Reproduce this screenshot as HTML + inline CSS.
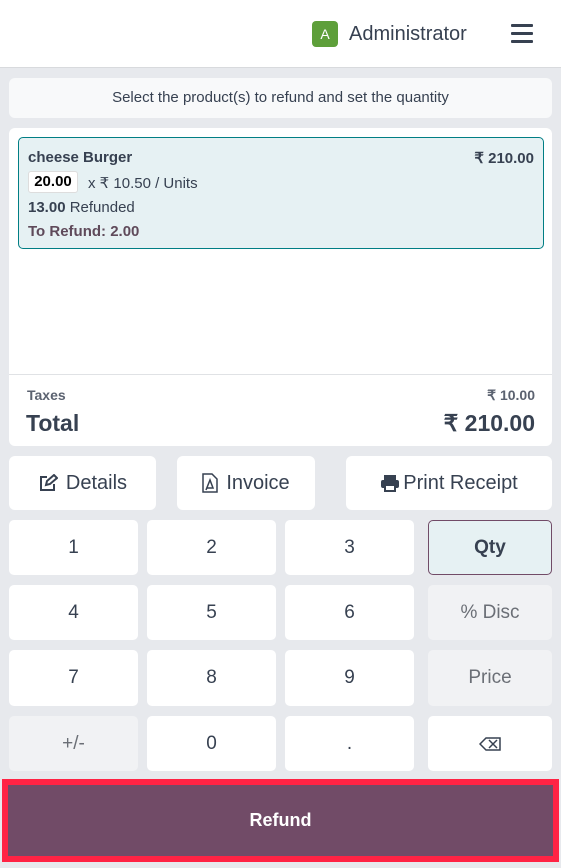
<!DOCTYPE html>
<html><head><style>
*{box-sizing:border-box;margin:0;padding:0}
body{width:561px;height:868px;background:#e7e9ed;font-family:"Liberation Sans",sans-serif;color:#374151;position:relative;overflow:hidden}
.abs{position:absolute}
.hdr{left:0;top:0;width:561px;height:68px;background:#fff;border-bottom:1px solid #d8dadd}
.av{left:312px;top:21px;width:26px;height:26px;background:#5e9f3a;border-radius:4px;color:#fff;font-size:14px;text-align:center;line-height:26px}
.nm{left:349px;top:23px;font-size:20px;color:#374151}
.burger{left:511px;top:24px;width:22px}
.burger div{height:3px;background:#374151;margin-bottom:5px;border-radius:1px}
.notice{left:9px;top:78px;width:543px;height:40px;background:#f8f9fa;border-radius:6px;text-align:center;font-size:15px;line-height:40px;color:#374151}
.panel{left:9px;top:128px;width:543px;height:318px;background:#fff;border-radius:6px}
.line{left:18px;top:137px;width:526px;height:112px;background:#e6f1f3;border:1px solid #017e84;border-radius:5px;font-size:15px}
.btn{background:#fff;border-radius:6px;text-align:center;font-size:20px;color:#374151;display:flex;align-items:center;justify-content:center;gap:8px}
.k{background:#fff;border-radius:5px;text-align:center;font-size:19px;color:#374151;display:flex;align-items:center;justify-content:center}
.g{background:#f1f2f4;color:#6b6f76}
</style></head><body>
<div class="abs hdr"></div>
<div class="abs av">A</div>
<div class="abs nm">Administrator</div>
<div class="abs burger"><div></div><div></div><div></div></div>
<div class="abs notice">Select the product(s) to refund and set the quantity</div>
<div class="abs panel"></div>
<div class="abs line">
 <div class="abs" style="left:9px;top:11px;font-weight:bold">cheese Burger</div>
 <div class="abs" style="right:9px;top:11px;font-weight:bold">₹ 210.00</div>
 <div class="abs" style="left:9px;top:33px;width:50px;height:22px;background:#fff;border:1px solid #ddd;border-radius:3px;font-weight:bold;color:#000;text-align:center;line-height:20px;font-size:15px">20.00</div>
 <div class="abs" style="left:69px;top:36px">x ₹ 10.50 / Units</div>
 <div class="abs" style="left:9px;top:61px"><b>13.00</b> Refunded</div>
 <div class="abs" style="left:9px;top:85px;color:#5f4a5a;font-weight:600">To Refund: 2.00</div>
</div>
<div class="abs" style="left:9px;top:374px;width:543px;height:1px;background:#e0e2e5"></div>
<div class="abs" style="left:27px;top:387px;font-size:14px;font-weight:bold;color:#5b6270">Taxes</div>
<div class="abs" style="right:26px;top:387px;font-size:14px;font-weight:bold;color:#5b6270">₹ 10.00</div>
<div class="abs" style="left:26px;top:410px;font-size:23px;font-weight:bold">Total</div>
<div class="abs" style="right:26px;top:410px;font-size:23px;font-weight:bold">₹ 210.00</div>

<div class="abs btn" style="left:9px;top:456px;width:147px;height:54px"><svg width="20" height="18" viewBox="0 0 20 18" fill="none" stroke="#374151" stroke-width="2"><path d="M9 3H3v13h13v-6"/><path d="M8 11l1-4 7-6 3 3-7 6z"/></svg>Details</div>
<div class="abs btn" style="left:177px;top:456px;width:138px;height:54px"><svg width="16" height="20" viewBox="0 0 16 20" fill="none" stroke="#374151" stroke-width="1.5"><path d="M1 1h9l5 5v13H1z"/><path d="M4 17l4-10 3 8H5"/></svg>Invoice</div>
<div class="abs btn" style="left:346px;top:456px;width:206px;height:54px;gap:3px"><svg width="20" height="18" viewBox="0 0 20 18" fill="#374151"><rect x="4" y="1" width="12" height="5"/><rect x="1" y="6" width="18" height="8" rx="2"/><rect x="5" y="11" width="10" height="6" fill="#fff" stroke="#374151" stroke-width="2"/></svg>Print Receipt</div>

<div class="abs k" style="left:9px;top:520px;width:129px;height:55px">1</div>
<div class="abs k" style="left:147px;top:520px;width:129px;height:55px">2</div>
<div class="abs k" style="left:285px;top:520px;width:129px;height:55px">3</div>
<div class="abs k" style="left:428px;top:520px;width:124px;height:55px;background:#e6f1f3;border:1px solid #714b67;font-weight:bold">Qty</div>
<div class="abs k" style="left:9px;top:585px;width:129px;height:55px">4</div>
<div class="abs k" style="left:147px;top:585px;width:129px;height:55px">5</div>
<div class="abs k" style="left:285px;top:585px;width:129px;height:55px">6</div>
<div class="abs k g" style="left:428px;top:585px;width:124px;height:55px">% Disc</div>
<div class="abs k" style="left:9px;top:650px;width:129px;height:56px">7</div>
<div class="abs k" style="left:147px;top:650px;width:129px;height:56px">8</div>
<div class="abs k" style="left:285px;top:650px;width:129px;height:56px">9</div>
<div class="abs k g" style="left:428px;top:650px;width:124px;height:56px">Price</div>
<div class="abs k g" style="left:9px;top:716px;width:129px;height:55px">+/-</div>
<div class="abs k" style="left:147px;top:716px;width:129px;height:55px">0</div>
<div class="abs k" style="left:285px;top:716px;width:129px;height:55px">.</div>
<div class="abs k" style="left:428px;top:716px;width:124px;height:55px"><svg width="22" height="14" viewBox="0 0 22 14" fill="none" stroke="#374151" stroke-width="1.5"><path d="M1 7L7 1h14v12H7z"/><path d="M10 3l8 8M18 3l-8 8"/></svg></div>

<div class="abs" style="left:2px;top:779px;width:557px;height:83px;border:6px solid #ff2344;background:#714b67;color:#fff;font-weight:bold;font-size:18px;text-align:center;line-height:71px">Refund</div>
</body></html>
